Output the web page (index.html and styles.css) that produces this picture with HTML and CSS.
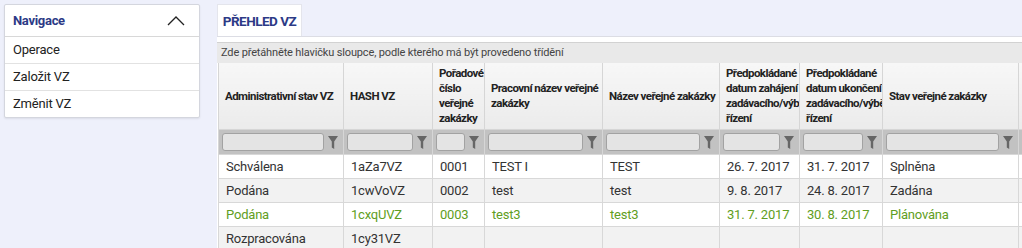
FILE: index.html
```html
<!DOCTYPE html>
<html lang="cs">
<head>
  <meta charset="UTF-8">
  <title>Přehled VZ</title>
  <link rel="stylesheet" href="styles.css">
</head>
<body>
  <div class="layout">
    <div class="nav">
      <div class="nav-head">
        <span>Navigace</span>
        <svg class="chevron" width="18" height="10" viewBox="0 0 18 10"><path d="M1 9 L9 1 L17 9" fill="none" stroke="#222" stroke-width="1.3"/></svg>
      </div>
      <div class="nav-item">Operace</div>
      <div class="nav-item">Založit VZ</div>
      <div class="nav-item">Změnit VZ</div>
    </div>

    <div class="content">
      <div class="tabs">
        <div class="tab">PŘEHLED VZ</div>
      </div>
      <div class="panel">
        <div class="group-bar">Zde přetáhněte hlavičku sloupce, podle kterého má být provedeno třídění</div>
        <table class="grid">
          <colgroup>
            <col style="width:125px"><col style="width:89px"><col style="width:52px"><col style="width:118px">
            <col style="width:117px"><col style="width:80px"><col style="width:83px"><col style="width:136px"><col style="width:120px">
          </colgroup>
          <thead>
            <tr class="head">
              <th>Administrativní stav VZ</th>
              <th>HASH VZ</th>
              <th>Pořadové číslo veřejné zakázky</th>
              <th>Pracovní název veřejné zakázky</th>
              <th>Název veřejné zakázky</th>
              <th>Předpokládané datum zahájení zadávacího/výběrového řízení</th>
              <th>Předpokládané datum ukončení zadávacího/výběrového řízení</th>
              <th>Stav veřejné zakázky</th>
              <th></th>
            </tr>
            <tr class="filters">
              <td><div class="filter"><span class="box"></span><svg class="funnel" width="10" height="13" viewBox="0 0 10 13"><path d="M0 0 H10 L6.2 5.5 V13 L3.8 11.5 V5.5 Z"/></svg></div></td>
              <td><div class="filter"><span class="box"></span><svg class="funnel" width="10" height="13" viewBox="0 0 10 13"><path d="M0 0 H10 L6.2 5.5 V13 L3.8 11.5 V5.5 Z"/></svg></div></td>
              <td><div class="filter"><span class="box"></span><svg class="funnel" width="10" height="13" viewBox="0 0 10 13"><path d="M0 0 H10 L6.2 5.5 V13 L3.8 11.5 V5.5 Z"/></svg></div></td>
              <td><div class="filter"><span class="box"></span><svg class="funnel" width="10" height="13" viewBox="0 0 10 13"><path d="M0 0 H10 L6.2 5.5 V13 L3.8 11.5 V5.5 Z"/></svg></div></td>
              <td><div class="filter"><span class="box"></span><svg class="funnel" width="10" height="13" viewBox="0 0 10 13"><path d="M0 0 H10 L6.2 5.5 V13 L3.8 11.5 V5.5 Z"/></svg></div></td>
              <td><div class="filter"><span class="box"></span><svg class="funnel" width="10" height="13" viewBox="0 0 10 13"><path d="M0 0 H10 L6.2 5.5 V13 L3.8 11.5 V5.5 Z"/></svg></div></td>
              <td><div class="filter"><span class="box"></span><svg class="funnel" width="10" height="13" viewBox="0 0 10 13"><path d="M0 0 H10 L6.2 5.5 V13 L3.8 11.5 V5.5 Z"/></svg></div></td>
              <td><div class="filter"><span class="box"></span><svg class="funnel" width="10" height="13" viewBox="0 0 10 13"><path d="M0 0 H10 L6.2 5.5 V13 L3.8 11.5 V5.5 Z"/></svg></div></td>
              <td><div class="filter"><span class="box"></span><svg class="funnel" width="10" height="13" viewBox="0 0 10 13"><path d="M0 0 H10 L6.2 5.5 V13 L3.8 11.5 V5.5 Z"/></svg></div></td>
            </tr>
          </thead>
          <tbody>
            <tr>
              <td>Schválena</td><td>1aZa7VZ</td><td>0001</td><td>TEST I</td><td>TEST</td>
              <td>26. 7. 2017</td><td>31. 7. 2017</td><td>Splněna</td><td></td>
            </tr>
            <tr class="alt">
              <td>Podána</td><td>1cwVoVZ</td><td>0002</td><td>test</td><td>test</td>
              <td>9. 8. 2017</td><td>24. 8. 2017</td><td>Zadána</td><td></td>
            </tr>
            <tr class="green">
              <td>Podána</td><td>1cxqUVZ</td><td>0003</td><td>test3</td><td>test3</td>
              <td>31. 7. 2017</td><td>30. 8. 2017</td><td>Plánována</td><td></td>
            </tr>
            <tr class="alt">
              <td>Rozpracována</td><td>1cy31VZ</td><td></td><td></td><td></td>
              <td></td><td></td><td></td><td></td>
            </tr>
          </tbody>
        </table>
      </div>
    </div>
  </div>
</body>
</html>
```

FILE: styles.css
```css
body {
  margin: 0;
  background: #eef0fb;
  font-family: Roboto, "DejaVu Sans Condensed", sans-serif;
  color: #222;
  overflow: hidden;
}
.layout {
  display: flex;
  align-items: flex-start;
  padding: 4px 0 0 4px;
}
.nav {
  width: 194px;
  background: white;
  border: 1px solid #d4d6de;
  border-radius: 2px;
  box-shadow: 0 1px 2px rgba(0,0,0,0.08);
  flex-shrink: 0;
}
.nav-head {
  display: flex;
  justify-content: space-between;
  align-items: center;
  height: 31px;
  padding: 0 14px 0 8px;
  border-bottom: 1px solid #d8d8d8;
  font-weight: bold;
  font-size: 13px;
  letter-spacing: -0.3px;
  color: #2c3a86;
}
.chevron {
  margin-top: 1px;
}
.nav-item {
  height: 26px;
  line-height: 26px;
  padding-left: 8px;
  font-size: 13px;
  letter-spacing: -0.2px;
  border-top: 1px solid #e2e2e2;
}
.nav-item:nth-child(2) {
  border-top: none;
}
.content {
  margin-left: 17px;
  flex: 1;
  min-width: 0;
}
.tabs {
  display: flex;
  height: 32px;
  border-bottom: 1px solid #dcdde4;
}
.tab {
  width: 83px;
  background: white;
  color: #2c3a86;
  font-weight: bold;
  font-size: 13.5px;
  letter-spacing: -0.5px;
  line-height: 32px;
  text-align: center;
  border: 1px solid #e4e5ec;
  border-bottom: none;
}
.panel {
  background: white;
  padding-top: 5px;
  overflow: hidden;
}
.group-bar {
  height: 20px;
  line-height: 20px;
  background: #e9e9e9;
  border-top: 1px solid #d2d2d2;
  font-size: 11px;
  letter-spacing: -0.15px;
  color: #444;
  padding-left: 4px;
}
.grid {
  table-layout: fixed;
  border-collapse: collapse;
  width: 920px;
  margin-left: 1px;
}
.grid th {
  height: 66px;
  padding: 0 0 0 6px;
  text-align: left;
  font-size: 11.5px;
  letter-spacing: -0.55px;
  line-height: 15px;
  font-weight: bold;
  color: #222;
  background: linear-gradient(#f7f7f7, #ebebeb);
  border: 1px solid #d6d6d6;
  border-top: none;
  overflow: hidden;
}
.filters td {
  height: 24px;
  padding: 0 3px;
  background: #c2c2c2;
  border-left: 1px solid #d6d6d6;
}
.filter {
  display: flex;
  align-items: center;
  gap: 4px;
}
.box {
  flex: 1;
  height: 16px;
  background: #e4e4e4;
  border: 1px solid #a2a2a2;
  border-radius: 3px;
}
.funnel {
  fill: #666;
  margin-right: 2px;
}
.grid tbody td {
  height: 23px;
  padding: 0 7px;
  font-size: 13px;
  letter-spacing: -0.2px;
  color: #333;
  border: 1px solid #d8d8d8;
  white-space: nowrap;
  overflow: hidden;
}
.grid tbody tr.alt td {
  background: #f2f2f2;
}
.grid tbody tr.green td {
  color: #5f9e22;
}
```
